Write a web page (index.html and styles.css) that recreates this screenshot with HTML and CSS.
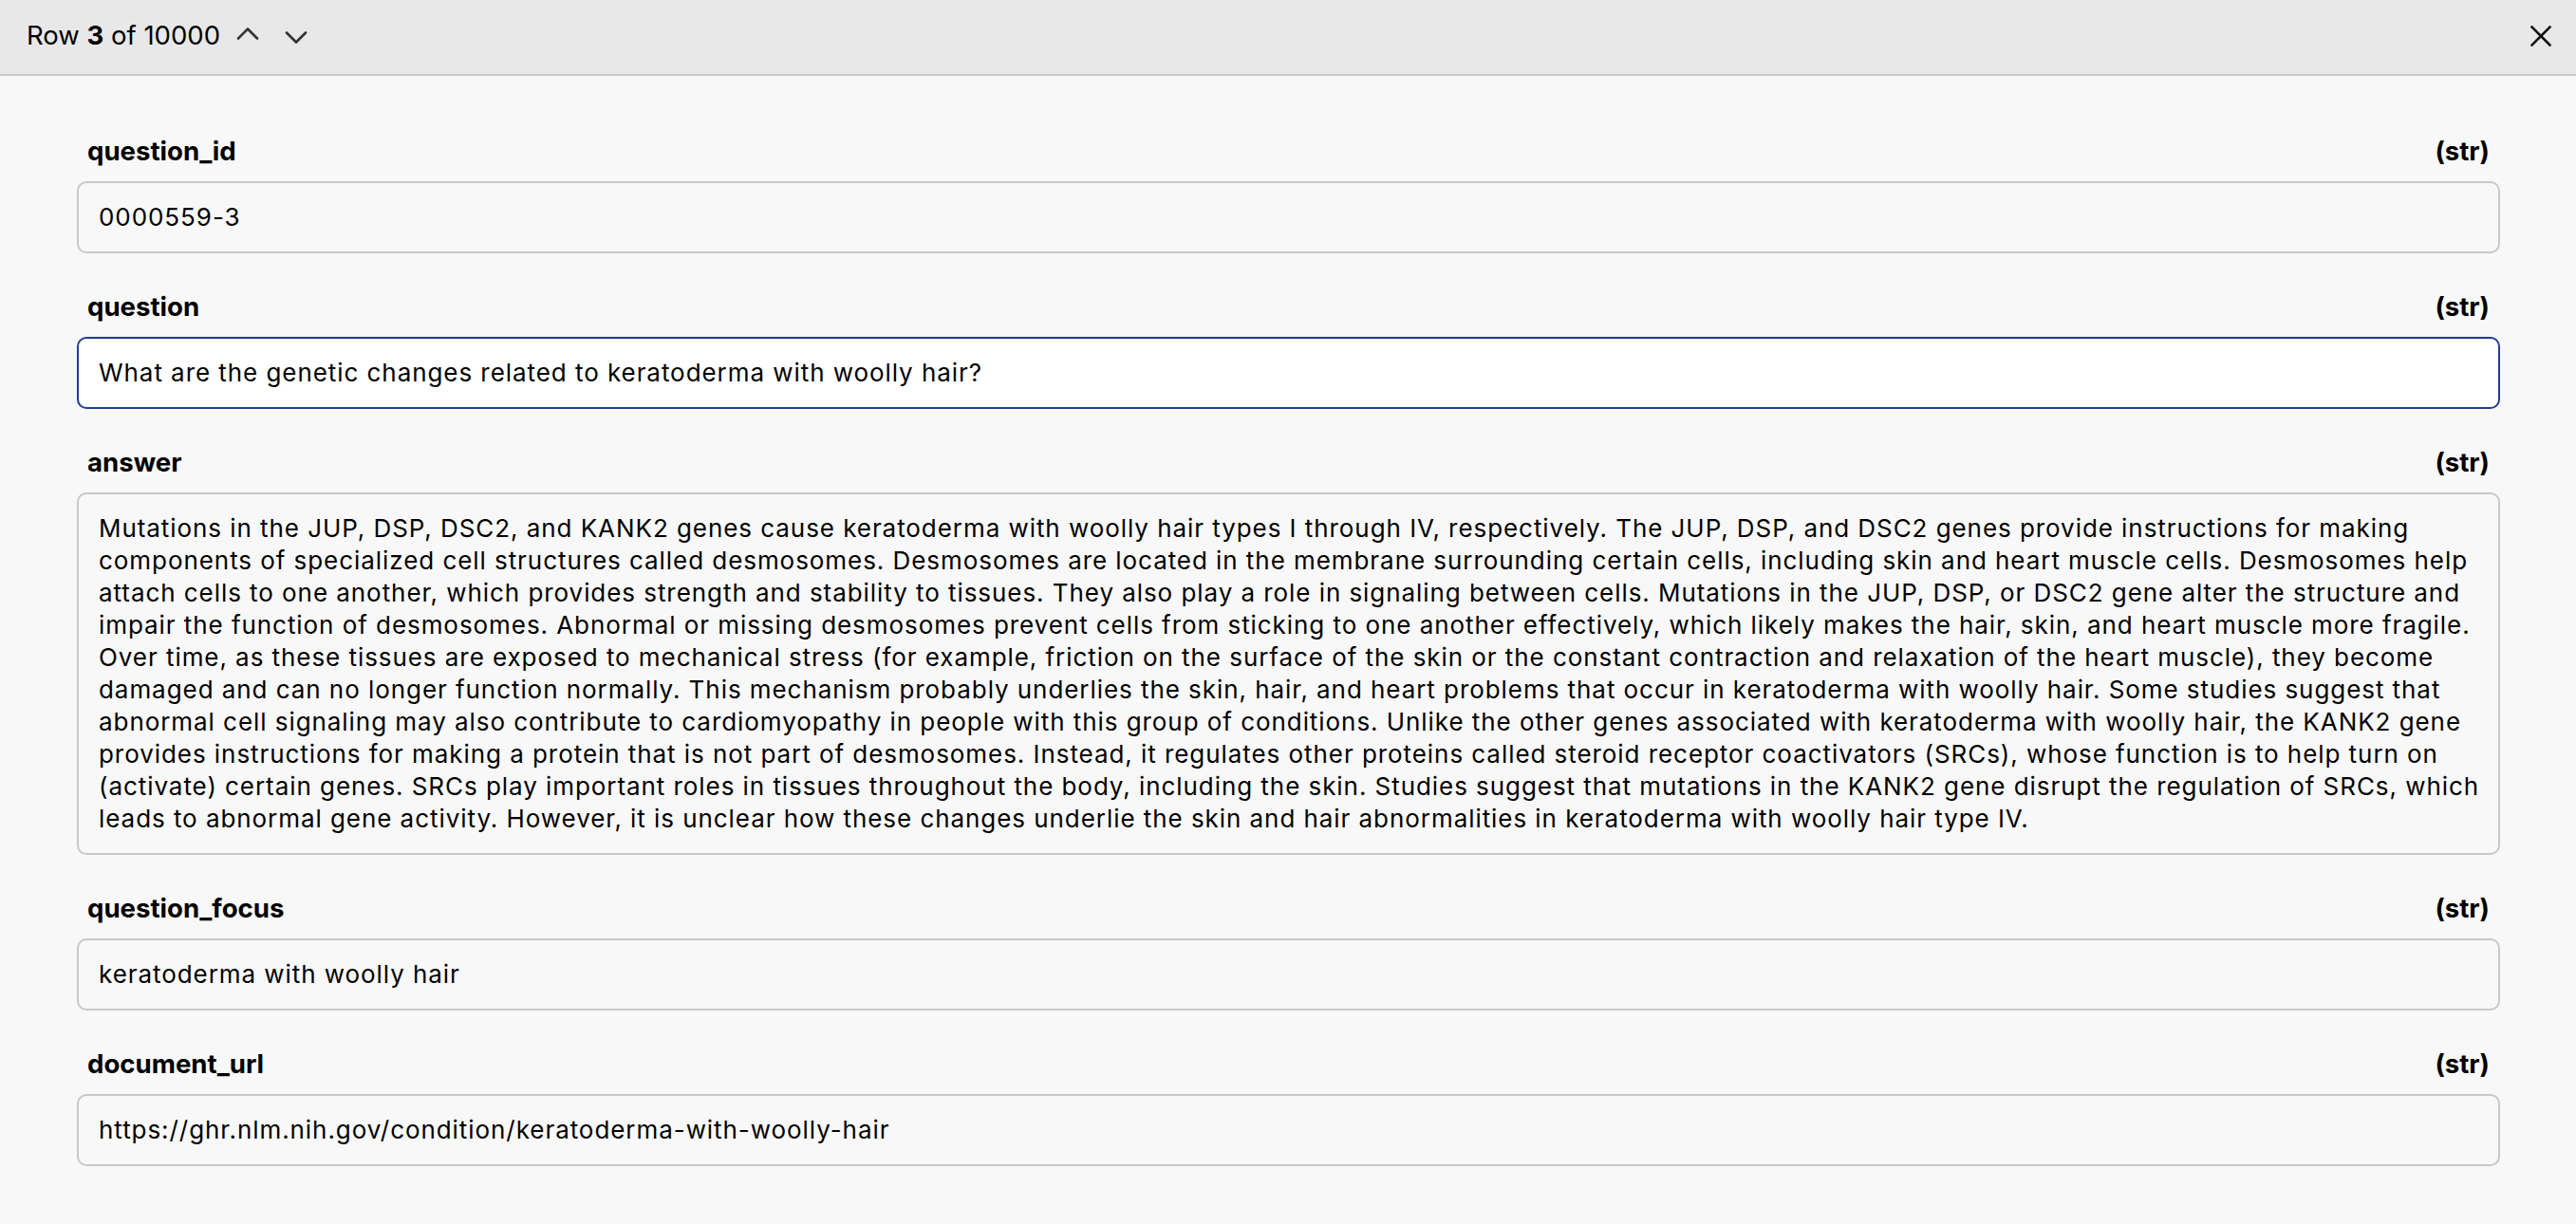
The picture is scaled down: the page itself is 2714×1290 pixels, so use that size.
FILE: index.html
```html
<!DOCTYPE html>
<html lang="en">
<head>
<meta charset="utf-8">
<title>Row viewer</title>
<link rel="stylesheet" href="styles.css">
</head>
<body>
<header class="topbar">
  <div class="nav">
    <span class="row-count">Row <b>3</b> of 10000</span>
    <button class="icon-btn up" aria-label="Previous row">
      <svg width="24" height="14" viewBox="0 0 24 14"><path d="M2 12.5 L12 2.5 L22 12.5" fill="none" stroke="#333" stroke-width="2.6" stroke-linecap="round" stroke-linejoin="round"/></svg>
    </button>
    <button class="icon-btn down" aria-label="Next row">
      <svg width="24" height="14" viewBox="0 0 24 14"><path d="M2 1.5 L12 11.5 L22 1.5" fill="none" stroke="#333" stroke-width="2.6" stroke-linecap="round" stroke-linejoin="round"/></svg>
    </button>
  </div>
  <button class="icon-btn close" aria-label="Close">
    <svg width="22" height="22" viewBox="0 0 22 22"><path d="M1.5 1.5 L20.5 20.5 M20.5 1.5 L1.5 20.5" fill="none" stroke="#111" stroke-width="2.6" stroke-linecap="square"/></svg>
  </button>
</header>
<main class="fields">
  <section class="field">
    <div class="field-head"><span class="name">question_id</span><span class="type">(str)</span></div>
    <div class="value">0000559-3</div>
  </section>
  <section class="field">
    <div class="field-head"><span class="name">question</span><span class="type">(str)</span></div>
    <div class="value focused">What are the genetic changes related to keratoderma with woolly hair?</div>
  </section>
  <section class="field">
    <div class="field-head"><span class="name">answer</span><span class="type">(str)</span></div>
    <div class="value">Mutations in the JUP, DSP, DSC2, and KANK2 genes cause keratoderma with woolly hair types I through IV, respectively. The JUP, DSP, and DSC2 genes provide instructions for making components of specialized cell structures called desmosomes. Desmosomes are located in the membrane surrounding certain cells, including skin and heart muscle cells. Desmosomes help attach cells to one another, which provides strength and stability to tissues. They also play a role in signaling between cells. Mutations in the JUP, DSP, or DSC2 gene alter the structure and impair the function of desmosomes. Abnormal or missing desmosomes prevent cells from sticking to one another effectively, which likely makes the hair, skin, and heart muscle more fragile. Over time, as these tissues are exposed to mechanical stress (for example, friction on the surface of the skin or the constant contraction and relaxation of the heart muscle), they become damaged and can no longer function normally. This mechanism probably underlies the skin, hair, and heart problems that occur in keratoderma with woolly hair. Some studies suggest that abnormal cell signaling may also contribute to cardiomyopathy in people with this group of conditions. Unlike the other genes associated with keratoderma with woolly hair, the KANK2 gene provides instructions for making a protein that is not part of desmosomes. Instead, it regulates other proteins called steroid receptor coactivators (SRCs), whose function is to help turn on (activate) certain genes. SRCs play important roles in tissues throughout the body, including the skin. Studies suggest that mutations in the KANK2 gene disrupt the regulation of SRCs, which leads to abnormal gene activity. However, it is unclear how these changes underlie the skin and hair abnormalities in keratoderma with woolly hair type IV.</div>
  </section>
  <section class="field">
    <div class="field-head"><span class="name">question_focus</span><span class="type">(str)</span></div>
    <div class="value">keratoderma with woolly hair</div>
  </section>
  <section class="field">
    <div class="field-head"><span class="name">document_url</span><span class="type">(str)</span></div>
    <div class="value">https://ghr.nlm.nih.gov/condition/keratoderma-with-woolly-hair</div>
  </section>
</main>
</body>
</html>
```
FILE: styles.css
```css
* { box-sizing: border-box; }
html, body {
  margin: 0;
  padding: 0;
  background: #f8f8f8;
  color: #000;
  font-family: Inter, "Noto Sans", sans-serif;
}
.topbar {
  height: 80px;
  background: #e8e8e8;
  border-bottom: 2px solid #c8c8c8;
  display: flex;
  align-items: center;
  justify-content: space-between;
  padding: 0 12px 4px 28px;
}
.nav {
  display: flex;
  align-items: center;
}
.row-count {
  font-size: 27.5px;
  line-height: 34px;
}
.row-count b { font-weight: 700; }
.icon-btn {
  background: none;
  border: 0;
  padding: 0;
  width: 40px;
  height: 40px;
  display: flex;
  align-items: center;
  justify-content: center;
  cursor: pointer;
}
.up { margin-left: 9px; margin-top: -4px; }
.down { margin-left: 11px; margin-top: 5px; }
.close { width: 50px; margin-top: 2px; }
.fields {
  padding: 62px 80px 40px 81px;
  display: flex;
  flex-direction: column;
  gap: 39px;
}
.field-head {
  display: flex;
  justify-content: space-between;
  padding: 0 11px;
  font-size: 27.6px;
  line-height: 34px;
  font-weight: 700;
  margin-bottom: 15px;
}
.value {
  border: 2px solid #c8c8c8;
  border-radius: 10px;
  background: #f8f8f8;
  padding: 19px 19px 19px 21px;
  font-size: 26px;
  letter-spacing: 0.94px;
  line-height: 34px;
}
.value.focused {
  background: #fff;
  border-color: #233a98;
}
```
